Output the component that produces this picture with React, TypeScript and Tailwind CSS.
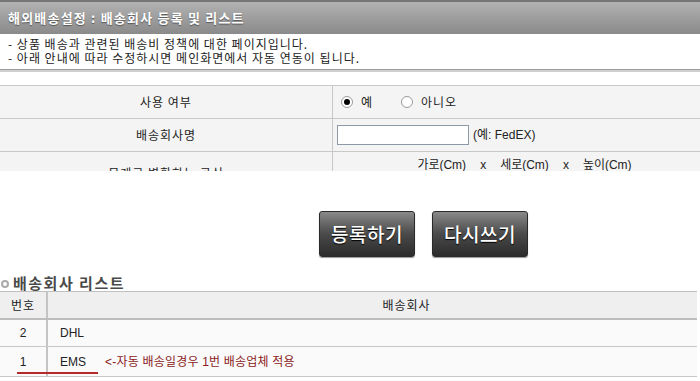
const kr = { fontFamily: '"Noto Sans CJK KR", "Liberation Sans", sans-serif' };
const mixed = { fontFamily: '"Liberation Sans", "Noto Sans CJK KR", sans-serif' };

const Radio = ({ checked }: { checked?: boolean }) => (
  <span className="inline-flex w-[12px] h-[12px] rounded-full border border-[#9a9a9a] bg-white items-center justify-center">
    {checked && <span className="w-[6px] h-[6px] rounded-full bg-black" />}
  </span>
);

const Button = ({ label }: { label: string }) => (
  <button
    type="button"
    className="w-[96px] h-[46px] rounded-[3px] border border-[#2a2a2a] bg-gradient-to-b from-[#8a8a8a] via-[#4a4a4a] to-[#2c2c2c] text-white text-[19px] font-medium tracking-[0.5px] [text-shadow:0_1px_1px_#000] shadow-[0_1px_1px_#999]"
    style={kr}
  >
    {label}
  </button>
);

export default function App() {
  return (
    <div className="w-[700px] h-[381px] overflow-hidden bg-white text-[#222] text-[12px] tracking-[1px]" style={kr}>
      {/* 상단 설정 영역 (잘림) */}
      <div className="h-[171px] overflow-hidden">
        <div className="h-[34px] border-t-2 border-[#767676] bg-gradient-to-b from-[#b2b2b2] to-[#8a8a8a] flex items-center px-2">
          <span className="text-white text-[13px] font-bold tracking-[1.2px] [text-shadow:0_1px_1px_#555]">
            해외배송설정 : 배송회사 등록 및 리스트
          </span>
        </div>
        <div className="px-2 pt-[3px] h-[35px] leading-[14px]">
          <div>- 상품 배송과 관련된 배송비 정책에 대한 페이지입니다.</div>
          <div>- 아래 안내에 따라 수정하시면 메인화면에서 자동 연동이 됩니다.</div>
        </div>
        <div className="h-[3px] border-t border-[#9a9a9a] bg-[#cfcfcf]" />
        <div className="h-[13px]" />
        <div className="border-t border-[#c8c8c8]">
          <div className="flex h-[33px] border-b border-[#c8c8c8] bg-[#f4f4f4]">
            <div className="w-[333px] border-r border-[#c8c8c8] flex items-center justify-center">사용 여부</div>
            <div className="flex-1 flex items-center pl-[8px] gap-[8px]">
              <Radio checked />
              <span className="w-[32px]">예</span>
              <Radio />
              <span>아니오</span>
            </div>
          </div>
          <div className="flex h-[33px] border-b border-[#c8c8c8] bg-[#f4f4f4]">
            <div className="w-[333px] border-r border-[#c8c8c8] flex items-center justify-center">배송회사명</div>
            <div className="flex-1 flex items-center pl-[4px] gap-[4px]">
              <input type="text" className="w-[132px] h-[20px] border border-[#8c9aa8] bg-white" />
              <span className="tracking-normal" style={mixed}>(예: FedEX)</span>
            </div>
          </div>
          <div className="flex h-[42px] bg-[#f4f4f4]">
            <div className="w-[333px] border-r border-[#c8c8c8] flex items-center justify-center">무게로 변환하는 공식</div>
            <div className="flex-1 flex justify-center pt-[4px] pl-[16px] tracking-normal" style={mixed}>
              <span>가로(Cm)</span>
              <span className="mx-[14px]">x</span>
              <span>세로(Cm)</span>
              <span className="mx-[14px]">x</span>
              <span>높이(Cm)</span>
            </div>
          </div>
        </div>
      </div>

      {/* 버튼 */}
      <div className="flex gap-[17px] pl-[319px] pt-[40px] h-[105px]">
        <Button label="등록하기" />
        <Button label="다시쓰기" />
      </div>

      {/* 배송회사 리스트 */}
      <div className="flex items-center h-[15px] gap-[4px] pl-[1px]">
        <span className="w-[8px] h-[8px] rounded-full border-2 border-[#aaa]" />
        <span className="text-[15px] font-bold text-[#4a4a4a] tracking-[1.5px]">배송회사 리스트</span>
      </div>
      <div className="w-[697px] border-t border-[#c0c0c0]">
        <div className="flex h-[28px] bg-[#efefef] border-b-2 border-[#bdbdbd]">
          <div className="w-[48px] border-r-2 border-[#c4c4c4] flex items-center justify-center">번호</div>
          <div className="flex-1 flex items-center justify-center pl-[68px]">배송회사</div>
        </div>
        <div className="flex h-[27px] bg-[#fafafa] border-b border-[#c8c8c8] tracking-normal">
          <div className="w-[48px] border-r-2 border-[#c4c4c4] flex items-center justify-center" style={mixed}>2</div>
          <div className="flex-1 flex items-center pl-[12px]" style={mixed}>DHL</div>
        </div>
        <div className="flex h-[30px] bg-[#fafafa] border-b border-[#c8c8c8] relative tracking-normal">
          <div className="w-[48px] border-r-2 border-[#c4c4c4] flex items-center justify-center" style={mixed}>1</div>
          <div className="flex-1 flex items-center pl-[12px] gap-[19px]" style={mixed}>
            <span>EMS</span>
            <span className="text-[#8b1a1a] tracking-[0.2px]">&lt;-자동 배송일경우 1번 배송업체 적용</span>
          </div>
          <span className="absolute left-[17px] top-[25px] w-[81px] h-[2px] bg-[#b52a2a]" />
        </div>
      </div>
    </div>
  );
}
